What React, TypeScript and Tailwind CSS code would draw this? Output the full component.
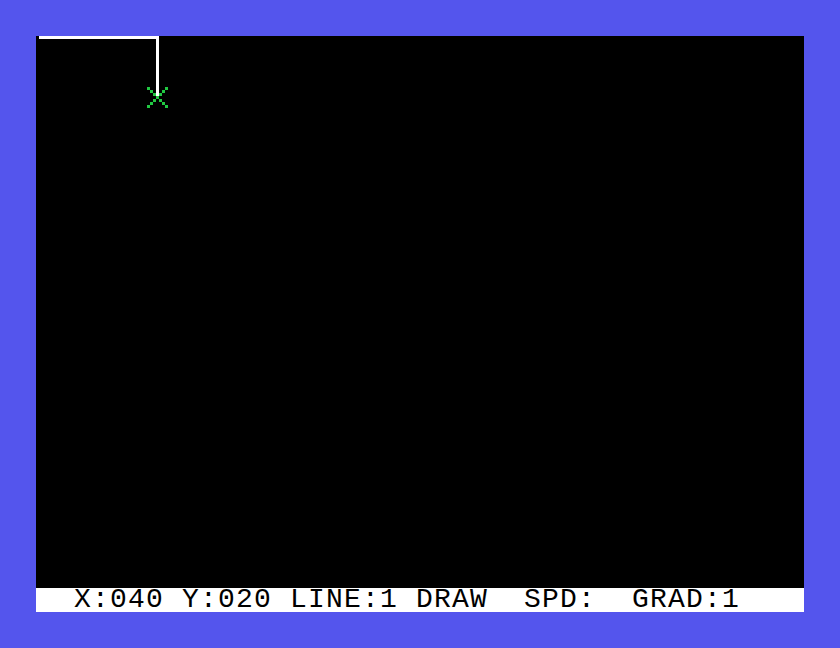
import React from 'react'

const cross = [
  [0, 0], [6, 0],
  [1, 1], [5, 1],
  [2, 2], [4, 2],
  [3, 3],
  [2, 4], [4, 4],
  [1, 5], [5, 5],
  [0, 6], [6, 6],
]

function Canvas() {
  return (
    <svg width="768" height="552" viewBox="0 0 768 552" shapeRendering="crispEdges" className="block">
      <rect x="0" y="0" width="768" height="552" fill="#000000" />
      {/* plotted line */}
      <rect x="3" y="0" width="120" height="3" fill="#ffffff" />
      <rect x="120" y="0" width="3" height="60" fill="#ffffff" />
      {/* cursor */}
      {cross.map(([c, r]) => (
        <rect key={`${c}-${r}`} x={111 + c * 3} y={51 + r * 3} width="3" height="3" fill="#21c842" />
      ))}
    </svg>
  )
}

export default function App() {
  return (
    <div className="w-[840px] h-[648px] bg-[#5455ed] p-[36px]">
      <div className="flex flex-col w-[768px] h-[576px]">
        <Canvas />
        <div className="h-[24px] bg-white flex items-center pl-[38px]">
          <span
            className="text-black text-[28px] leading-[24px] tracking-[1.2px] whitespace-pre"
            style={{ fontFamily: '"Liberation Mono", "DejaVu Sans Mono", monospace' }}
          >
            {'X:040 Y:020 LINE:1 DRAW  SPD:  GRAD:1'}
          </span>
        </div>
      </div>
    </div>
  )
}
